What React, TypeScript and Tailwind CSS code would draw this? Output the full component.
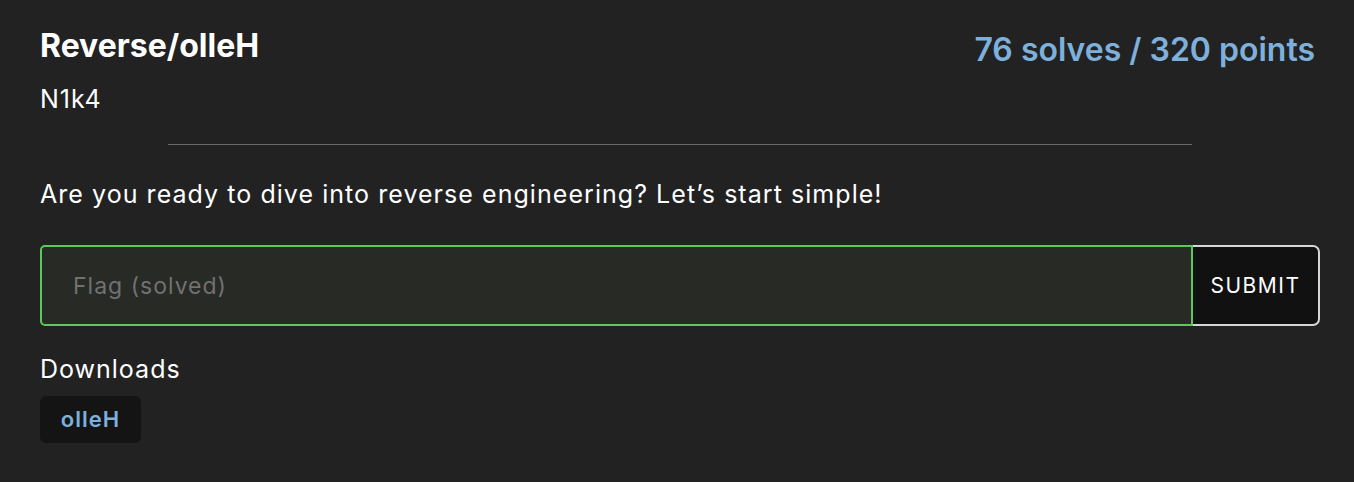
export default function App() {
  return (
    <div
      className="min-h-[482px] bg-[#222222] pl-10 pr-[34px] pt-[26px] text-white"
      style={{ fontFamily: "Inter, 'Noto Sans', sans-serif" }}
    >
      {/* header */}
      <div className="flex items-start justify-between">
        <div>
          <h1 className="text-[32px] font-bold leading-[40px]">Reverse/olleH</h1>
          <p className="mt-[17px] text-[25px] leading-[32px] tracking-[1px]">N1k4</p>
        </div>
        <div className="mr-[5px] mt-[4px] text-[32px] font-semibold leading-[40px] text-[#7eb0dc]">
          76 solves / 320 points
        </div>
      </div>

      <hr className="mx-auto mt-[29px] w-4/5 border-t border-[#6a6a6a]" />

      <p className="mt-[33px] text-[25px] leading-[32px] tracking-[1.05px]">
        Are you ready to dive into reverse engineering? Let’s start simple!
      </p>

      {/* flag form */}
      <div className="mt-[35px] flex h-[81px]">
        <input
          className="h-full flex-1 rounded-l-[5px] border-2 border-[#5dc95d] bg-[#272a25] pl-[31px] pr-4 text-[23px] tracking-[1px] text-white outline-none placeholder:text-[#717171]"
          placeholder="Flag (solved)"
          disabled
        />
        <button className="h-full w-[127px] rounded-r-[7px] border-2 border-l-0 border-[#d6d6d6] bg-[#111111] text-[21px] tracking-[1.5px] text-white">
          SUBMIT
        </button>
      </div>

      <div className="mt-[27px] text-[25px] leading-[32px] tracking-[1px]">Downloads</div>
      <div className="mt-[11px] inline-flex h-[47px] w-[101px] items-center justify-center rounded-[6px] bg-[#141414] text-[22px] font-semibold tracking-[1px] text-[#7eb0dc]">
        olleH
      </div>
    </div>
  );
}
